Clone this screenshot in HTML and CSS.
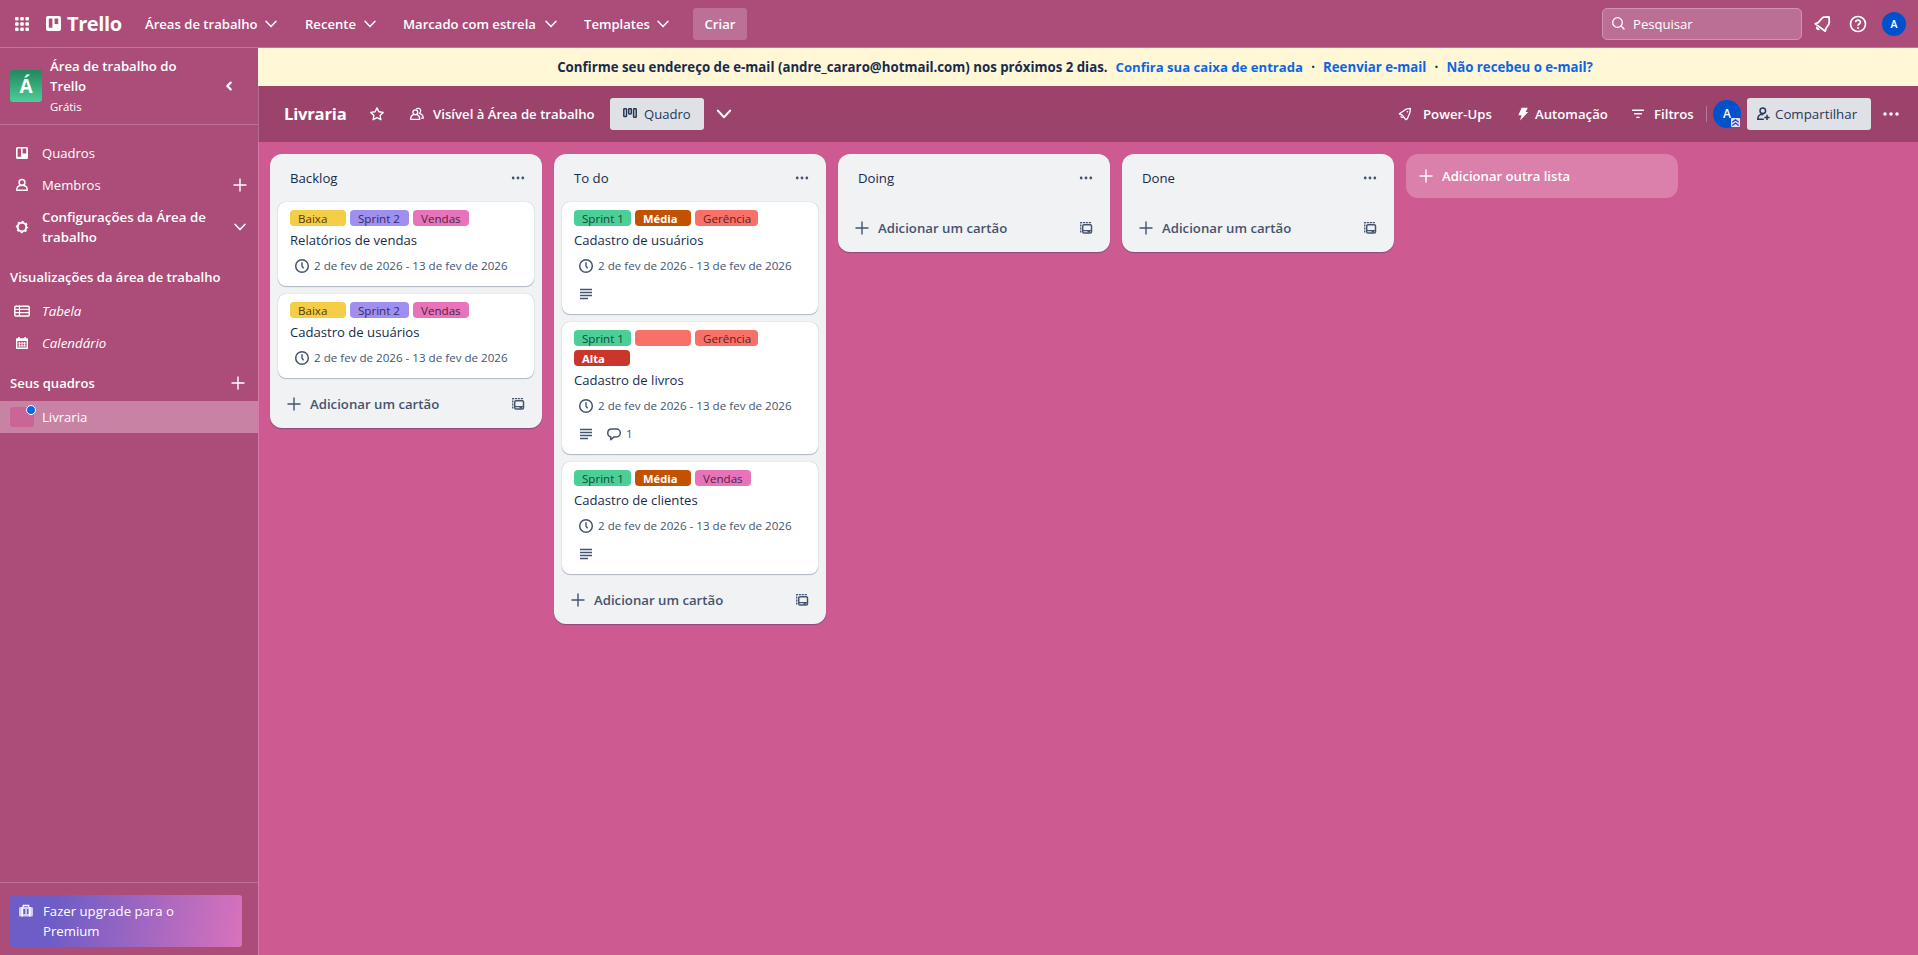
FILE: index.html
```html
<!DOCTYPE html>
<html lang="pt-BR">
<head>
<meta charset="utf-8">
<title>Livraria | Trello</title>
<link rel="stylesheet" href="styles.css">
</head>
<body>
<svg class="sprite" aria-hidden="true">
  <symbol id="chevron" viewBox="0 0 16 16"><path d="M3 5.2 8 10.6 13 5.2" fill="none" stroke="currentColor" stroke-width="1.5" stroke-linecap="round" stroke-linejoin="round"/></symbol>
  <symbol id="plus" viewBox="0 0 16 16"><path d="M8 2v12M2 8h12" fill="none" stroke="currentColor" stroke-width="1.4" stroke-linecap="round"/></symbol>
  <symbol id="dots" viewBox="0 0 16 16"><g fill="currentColor"><circle cx="3.2" cy="8" r="1.4"/><circle cx="8" cy="8" r="1.4"/><circle cx="12.8" cy="8" r="1.4"/></g></symbol>
  <symbol id="clock" viewBox="0 0 16 16"><circle cx="8" cy="8" r="6.3" fill="none" stroke="currentColor" stroke-width="1.5"/><path d="M8 4.2V8l1.600 2.300" fill="none" stroke="currentColor" stroke-width="1.4"/></symbol>
  <symbol id="desc" viewBox="0 0 16 16"><path d="M2 3.500h12M2 6.500h12M2 9.500h12M2 12.500h8" fill="none" stroke="currentColor" stroke-width="1.6"/></symbol>
  <symbol id="comment" viewBox="0 0 16 16"><path d="M5.600 3.100h4.800a3.900 3.900 0 0 1 0 7.800H8L4.800 13.700v-2.900A3.900 3.900 0 0 1 5.600 3.100z" fill="none" stroke="currentColor" stroke-width="1.5" stroke-linejoin="round"/></symbol>
  <symbol id="template" viewBox="0 0 16 16"><path d="M2.700 12.600V2.600h10.300" fill="none" stroke="currentColor" stroke-width="1.3" stroke-dasharray="2.2 .8"/><rect x="4.700" y="4.700" width="8.800" height="8.400" rx="1.300" fill="none" stroke="currentColor" stroke-width="1.5"/><path d="M5 10.600h8.500M9.500 11.800h2.500" stroke="currentColor" stroke-width="1.2"/></symbol>
  <symbol id="board" viewBox="0 0 16 16"><path fill="currentColor" fill-rule="evenodd" d="M3.500 2h9A1.500 1.500 0 0 1 14 3.500v9a1.500 1.500 0 0 1-1.500 1.500h-9A1.500 1.500 0 0 1 2 12.500v-9A1.500 1.500 0 0 1 3.500 2zM3.600 3.400v8.400h3.500V3.400zm5 0v5.200h3.600V3.400z"/></symbol>
  <symbol id="member" viewBox="0 0 16 16"><path d="M2.700 13.300c0-2.500 1.500-4.400 3.300-4.800h4c1.800.4 3.300 2.300 3.300 4.800z" fill="none" stroke="currentColor" stroke-width="1.4" stroke-linejoin="round"/><circle cx="8" cy="5.400" r="2.900" fill="none" stroke="currentColor" stroke-width="1.5"/></symbol>
  <symbol id="gear" viewBox="0 0 16 16"><circle cx="8" cy="8" r="4.300" fill="none" stroke="currentColor" stroke-width="1.900"/><circle cx="8" cy="8" r="5.400" fill="none" stroke="currentColor" stroke-width="1.500" stroke-dasharray="2.1 2.141" stroke-dashoffset="1"/></symbol>
  <symbol id="rocket" viewBox="0 0 16 16"><path d="M13.500 2.400 9 3.200 2.400 7.800l2.900 1.300 3.400 4.500 1.500-.7L12.800 7z" fill="none" stroke="currentColor" stroke-width="1.3" stroke-linejoin="round"/><path d="M5.200 9.200l-1.500 1.900 2.600.5" fill="none" stroke="currentColor" stroke-width="1"/><circle cx="10.400" cy="5.700" r=".8" fill="currentColor"/></symbol>
  <symbol id="view-users" viewBox="0 0 16 16"><path d="M1.600 13.300c0-2.400 1.300-4 2.700-4.600h3.800c1.500.6 2.700 2.200 2.700 4.600z" fill="none" stroke="currentColor" stroke-width="1.3" stroke-linejoin="round"/><circle cx="6.300" cy="6.200" r="2.400" fill="none" stroke="currentColor" stroke-width="1.3"/><path d="M7.200 3.200c1.200-1.500 4.400-1 4.500 1.500 0 1.400-.6 2.200-1.200 2.700 1.900.6 3.700 2.200 3.800 4.700h-2" fill="none" stroke="currentColor" stroke-width="1.3"/></symbol>
</svg>

<header class="topbar">
  <svg class="apps" viewBox="0 0 14 14"><g fill="currentColor"><rect width="3.600" height="3.600" rx="1"/><rect x="5.200" width="3.600" height="3.600" rx="1"/><rect x="10.400" width="3.600" height="3.600" rx="1"/><rect y="5.200" width="3.600" height="3.600" rx="1"/><rect x="5.200" y="5.200" width="3.600" height="3.600" rx="1"/><rect x="10.400" y="5.200" width="3.600" height="3.600" rx="1"/><rect y="10.400" width="3.600" height="3.600" rx="1"/><rect x="5.200" y="10.400" width="3.600" height="3.600" rx="1"/><rect x="10.400" y="10.400" width="3.600" height="3.600" rx="1"/></g></svg>
  <div class="logo">
    <svg width="15" height="15" viewBox="0 0 15 15"><path fill="currentColor" fill-rule="evenodd" d="M2 0h11a2 2 0 0 1 2 2v11a2 2 0 0 1-2 2H2a2 2 0 0 1-2-2V2a2 2 0 0 1 2-2zm.8 2.500v9.300h3.600V2.500zm5.800 0v5.500h3.600V2.500z"/></svg>
    <span class="wordmark">Trello</span>
  </div>
  <nav class="menu">
    <a class="menu-item w-areas">Áreas de trabalho<svg class="ic"><use href="#chevron"/></svg></a>
    <a class="menu-item w-recent">Recente<svg class="ic"><use href="#chevron"/></svg></a>
    <a class="menu-item w-star">Marcado com estrela<svg class="ic"><use href="#chevron"/></svg></a>
    <a class="menu-item w-tpl">Templates<svg class="ic"><use href="#chevron"/></svg></a>
  </nav>
  <button class="create">Criar</button>
  <div class="search"><svg class="ic" viewBox="0 0 16 16"><circle cx="6.500" cy="6.500" r="4.800" fill="none" stroke="currentColor" stroke-width="1.3"/><path d="m10.100 10.100 2.900 3" stroke="currentColor" stroke-width="1.4" stroke-linecap="round"/></svg>Pesquisar</div>
  <svg class="bell" width="18" height="18" viewBox="0 0 18 18"><path d="M10.300 2.200 16 1.900l.3 5.200c-.2 3-2 4.300-3.300 6.100l-.8 3L2.300 8.900l3-1.400c1.700-1.800 2.600-4 5-5.300z" fill="none" stroke="currentColor" stroke-width="1.8" stroke-linejoin="round"/><path d="M3.600 11.900c-.8 1.700.5 3.500 2.800 2.700z" fill="currentColor" stroke="currentColor"/></svg>
  <svg class="help" width="18" height="18" viewBox="0 0 18 18"><circle cx="9" cy="9" r="7.500" fill="none" stroke="currentColor" stroke-width="1.7"/><path d="M6.700 7.300c0-3 4.700-3 4.700-.1C11.400 9 9 8.900 9 10.800" fill="none" stroke="currentColor" stroke-width="1.7"/><circle cx="9" cy="12.900" r="1" fill="currentColor"/></svg>
  <div class="avatar small">A</div>
</header>

<div class="main">
  <aside class="sidebar">
    <div class="ws">
      <div class="ws-logo">Á</div>
      <div class="ws-text"><div class="ws-name">Área de trabalho do Trello</div><div class="ws-plan">Grátis</div></div>
      <svg class="collapse" width="16" height="16" viewBox="0 0 16 16"><path d="M9.700 4.600 6.300 8l3.400 3.400" fill="none" stroke="currentColor" stroke-width="2.2" stroke-linecap="round" stroke-linejoin="round"/></svg>
    </div>
    <nav class="nav">
      <a class="row"><svg class="ic"><use href="#board"/></svg><span class="row-text">Quadros</span></a>
      <a class="row"><svg class="ic"><use href="#member"/></svg><span class="row-text">Membros</span><svg class="ic"><use href="#plus"/></svg></a>
      <a class="row tall"><svg class="ic"><use href="#gear"/></svg><span class="row-text strong">Configurações da Área de trabalho</span><svg class="ic"><use href="#chevron"/></svg></a>
      <h2 class="heading">Visualizações da área de trabalho</h2>
      <a class="row italic"><svg class="ic" viewBox="0 0 16 16"><rect x=".8" y="3.200" width="14.400" height="9.900" rx="1" fill="none" stroke="currentColor" stroke-width="1.5"/><path d="M1 6.300h14M1 9.600h14M5.500 3.500v9.500" stroke="currentColor" stroke-width="1.2"/></svg><span class="row-text">Tabela</span></a>
      <a class="row italic"><svg class="ic" viewBox="0 0 16 16"><path fill="currentColor" fill-rule="evenodd" d="M4 2h1.700v1.200h4.600V2H12v1.200h1.200c.5 0 .8.300.8.800v9.200c0 .5-.3.800-.8.800H2.800c-.5 0-.8-.3-.8-.8V4c0-.5.3-.8.8-.8H4zM3.400 6v6.500h9.200V6z"/><path d="M4.300 8.200h7.500M4.300 10.900h7.500M5.400 6.900v4.800M8 6.900v4.800M10.600 6.900v4.800" stroke="currentColor" stroke-width=".9"/></svg><span class="row-text">Calendário</span></a>
      <h2 class="heading">Seus quadros<svg class="ic"><use href="#plus"/></svg></h2>
      <a class="row selected"><span class="thumb"><i class="dot"></i></span><span class="row-text">Livraria</span></a>
    </nav>
    <div class="upgrade-box">
      <div class="upgrade">
        <svg class="ic" viewBox="0 0 16 16"><rect x="1" y="4" width="14" height="9.600" rx="1.500" fill="currentColor" opacity=".7"/><path d="M5.300 4V2.500h5.400V4M4.200 4v9.600M11.800 4v9.600" fill="none" stroke="currentColor" stroke-width="1.4"/><path d="M5.300 6h2v5h-2zM9 6h1.500v5H9z" fill="#6e5dc6"/></svg>
        <span>Fazer upgrade para o Premium</span>
      </div>
    </div>
  </aside>

  <section class="content">
    <div class="banner">
      <span class="b-text">Confirme seu endereço de e-mail (andre_cararo@hotmail.com) nos próximos 2 dias.</span><a class="b-link l1">Confira sua caixa de entrada</a><span class="sep">·</span><a class="b-link">Reenviar e-mail</a><span class="sep">·</span><a class="b-link">Não recebeu o e-mail?</a>
    </div>
    <div class="board-head">
      <h1 class="title">Livraria</h1>
      <svg class="ic star" viewBox="0 0 16 16"><path d="m8 1.900 1.900 3.900 4.300.6-3.100 3 .7 4.300L8 11.700l-3.800 2 .7-4.300-3.100-3 4.300-.6z" fill="none" stroke="currentColor" stroke-width="1.4" stroke-linejoin="round"/></svg>
      <div class="visibility"><svg class="ic"><use href="#view-users"/></svg>Visível à Área de trabalho</div>
      <button class="light quadro"><svg class="ic" viewBox="0 0 16 16"><g fill="none" stroke="currentColor" stroke-width="1.5"><rect x="1.800" y="2.700" width="2.700" height="7.800" rx=".6"/><rect x="6.700" y="2.700" width="2.600" height="5.200" rx=".6"/><rect x="11.600" y="2.700" width="2.600" height="8.600" rx=".6"/></g></svg>Quadro</button>
      <svg class="views-arrow" width="20" height="20"><use href="#chevron"/></svg>
      <div class="tool powerups"><svg class="ic"><use href="#rocket"/></svg>Power-Ups</div>
      <div class="tool auto"><svg class="ic" viewBox="0 0 16 16"><path d="M6.600 1.800h6.200L10.700 6h2.500L5 14.500l1.600-5.300H3.300z" fill="currentColor"/></svg>Automação</div>
      <div class="tool filters"><svg class="ic" viewBox="0 0 16 16"><path d="M2.600 4.200h10.800M4.600 7.800h6.800M6.900 11.400h2.200" stroke="currentColor" stroke-width="1.4" stroke-linecap="round"/></svg>Filtros</div>
      <i class="divider"></i>
      <div class="avatar big">A<svg class="admin" width="9" height="9" viewBox="0 0 9 9"><rect width="9" height="9" rx="1" fill="#dfe1f3"/><path d="M1.300 4.200 4.500 1.800l3.200 2.400M1.300 7.400 4.500 5l3.200 2.400" fill="none" stroke="#3442a8" stroke-width="1.3"/></svg></div>
      <button class="light share"><svg class="ic" viewBox="0 0 16 16"><circle cx="7.800" cy="4.800" r="2.800" fill="none" stroke="currentColor" stroke-width="1.5"/><path d="M8.800 13.200H2.800c0-2.800 1.500-4.200 3.200-4.800h2.400M12 8.800v5.200M9.400 11.400h5.200" fill="none" stroke="currentColor" stroke-width="1.5"/></svg>Compartilhar</button>
      <svg class="more" width="20" height="20"><use href="#dots"/></svg>
    </div>

    <div class="board">
      <div class="list">
        <div class="list-head">Backlog<svg class="ic"><use href="#dots"/></svg></div>
        <div class="cards">
          <article class="card">
            <div class="labels"><span class="label yellow">Baixa</span><span class="label purple w59">Sprint 2</span><span class="label pink">Vendas</span></div>
            <div class="card-title">Relatórios de vendas</div>
            <div class="badges"><span class="date"><svg class="ic"><use href="#clock"/></svg>2 de fev de 2026 - 13 de fev de 2026</span></div>
          </article>
          <article class="card">
            <div class="labels"><span class="label yellow">Baixa</span><span class="label purple w59">Sprint 2</span><span class="label pink">Vendas</span></div>
            <div class="card-title">Cadastro de usuários</div>
            <div class="badges"><span class="date"><svg class="ic"><use href="#clock"/></svg>2 de fev de 2026 - 13 de fev de 2026</span></div>
          </article>
        </div>
        <div class="list-foot"><svg class="ic"><use href="#plus"/></svg><span>Adicionar um cartão</span><svg class="ic"><use href="#template"/></svg></div>
      </div>

      <div class="list">
        <div class="list-head">To do<svg class="ic"><use href="#dots"/></svg></div>
        <div class="cards">
          <article class="card">
            <div class="labels"><span class="label green w57">Sprint 1</span><span class="label orange">Média</span><span class="label red w63">Gerência</span></div>
            <div class="card-title">Cadastro de usuários</div>
            <div class="badges"><span class="date"><svg class="ic"><use href="#clock"/></svg>2 de fev de 2026 - 13 de fev de 2026</span><span class="badge"><svg class="ic"><use href="#desc"/></svg></span></div>
          </article>
          <article class="card">
            <div class="labels"><span class="label green w57">Sprint 1</span><span class="label red"></span><span class="label red w63">Gerência</span><span class="label crimson">Alta</span></div>
            <div class="card-title">Cadastro de livros</div>
            <div class="badges"><span class="date"><svg class="ic"><use href="#clock"/></svg>2 de fev de 2026 - 13 de fev de 2026</span><span class="badge"><svg class="ic"><use href="#desc"/></svg></span><span class="badge"><svg class="ic"><use href="#comment"/></svg>1</span></div>
          </article>
          <article class="card">
            <div class="labels"><span class="label green w57">Sprint 1</span><span class="label orange">Média</span><span class="label pink">Vendas</span></div>
            <div class="card-title">Cadastro de clientes</div>
            <div class="badges"><span class="date"><svg class="ic"><use href="#clock"/></svg>2 de fev de 2026 - 13 de fev de 2026</span><span class="badge"><svg class="ic"><use href="#desc"/></svg></span></div>
          </article>
        </div>
        <div class="list-foot"><svg class="ic"><use href="#plus"/></svg><span>Adicionar um cartão</span><svg class="ic"><use href="#template"/></svg></div>
      </div>

      <div class="list">
        <div class="list-head">Doing<svg class="ic"><use href="#dots"/></svg></div>
        <div class="list-foot"><svg class="ic"><use href="#plus"/></svg><span>Adicionar um cartão</span><svg class="ic"><use href="#template"/></svg></div>
      </div>

      <div class="list">
        <div class="list-head">Done<svg class="ic"><use href="#dots"/></svg></div>
        <div class="list-foot"><svg class="ic"><use href="#plus"/></svg><span>Adicionar um cartão</span><svg class="ic"><use href="#template"/></svg></div>
      </div>

      <div class="add-list"><svg class="ic"><use href="#plus"/></svg>Adicionar outra lista</div>
    </div>
  </section>
</div>
</body>
</html>
```
FILE: styles.css
```css
* { box-sizing: border-box; }
body {
  margin: 0;
  height: 955px;
  overflow: hidden;
  display: flex;
  flex-direction: column;
  font: 13.1px/20px "Open Sans", "Noto Sans", sans-serif;
  color: #172b4d;
  background: #cd5a91;
}
h1, h2 { margin: 0; font: inherit; }
button { border: 0; font: inherit; color: inherit; }
svg { display: block; flex: none; }
.ic { width: 16px; height: 16px; }
.sprite { position: absolute; width: 0; height: 0; }

/* Top navigation */
.topbar {
  flex: none;
  height: 48px;
  display: flex;
  align-items: center;
  padding: 0 12px 0 15px;
  background: #ab4c79;
  border-bottom: 1px solid #bf749a;
  color: #fff;
}
.apps { width: 14px; height: 14px; }
.logo { display: flex; align-items: center; gap: 6px; width: 99px; margin-left: 17px; }
.wordmark { font-size: 20px; font-weight: 700; line-height: 24px; letter-spacing: -0.4px; }
.menu { display: flex; font-weight: 600; }
.menu-item { display: flex; align-items: center; justify-content: space-between; }
.w-areas { width: 134px; }
.w-recent { width: 73px; margin-left: 26px; }
.w-star { width: 156px; margin-left: 25px; }
.w-tpl { width: 87px; margin-left: 25px; }
.create {
  width: 54px;
  height: 32px;
  margin-left: 22px;
  padding: 0;
  border-radius: 3px;
  background: #bd7095;
  font-weight: 600;
}
.search {
  display: flex;
  align-items: center;
  gap: 6px;
  width: 200px;
  height: 32px;
  margin-left: auto;
  padding: 1px 8px 0;
  border: 1px solid #cf93b2;
  border-radius: 5px;
  background: #bc6f94;
}
.bell { margin-left: 11px; }
.help { margin-left: 18px; }
.avatar {
  display: grid;
  place-items: center;
  border-radius: 50%;
  background: #0052cc;
  color: #fff;
  font-weight: 600;
}
.small { width: 24px; height: 24px; margin-left: 15px; font-size: 10.5px; }

/* Page frame */
.main { flex: 1; display: flex; min-height: 0; }

/* Sidebar */
.sidebar {
  flex: none;
  width: 258px;
  display: flex;
  flex-direction: column;
  background: #ab4d78;
  color: #fff;
}
.ws {
  display: flex;
  align-items: center;
  gap: 8px;
  height: 77px;
  padding: 0 21px 0 10px;
  border-bottom: 1px solid #bd7195;
}
.ws-logo {
  width: 32px;
  height: 32px;
  border-radius: 3px;
  background: linear-gradient(#22875c, #4bce97);
  text-align: center;
  font-size: 19px;
  font-weight: 700;
  line-height: 32px;
}
.ws-text { width: 150px; }
.ws-name { width: 135px; font-size: 13.2px; font-weight: 600; }
.ws-plan { padding-top: 1px; font-size: 11.4px; line-height: 19px; }
.collapse { margin-left: auto; }
.nav { padding-top: 12px; }
.row { display: flex; align-items: center; gap: 12px; height: 32px; padding: 0 10px 0 14px; }
.row-text { flex: 1; }
.tall { height: 52px; }
.strong { font-weight: 600; font-size: 13.3px; }
.italic .row-text { font-size: 13.3px; font-style: italic; }
.heading {
  display: flex;
  align-items: center;
  justify-content: space-between;
  height: 42px;
  padding: 6px 12px 0 10px;
  font-size: 13.05px;
  font-weight: 600;
}
.selected { padding-left: 10px; gap: 8px; background: #c782a4; }
.thumb { position: relative; width: 24px; height: 20px; border-radius: 3px; background: #cb6597; }
.dot {
  position: absolute;
  top: -2px;
  right: -2px;
  width: 10px;
  height: 10px;
  border: 1px solid #fff;
  border-radius: 50%;
  background: #0c66e4;
}
.upgrade-box { margin-top: auto; height: 73px; padding: 12px 16px 0 10px; border-top: 1px solid #bd7195; }
.upgrade {
  display: flex;
  gap: 9px;
  height: 52px;
  padding: 6px 50px 6px 8px;
  border-radius: 3px;
  background: linear-gradient(100deg, #6e5dc6 20%, #d671bc 97%);
  font-size: 13.2px;
}
.upgrade .ic { margin-top: 2px; }

/* Email banner */
.content { flex: 1; min-width: 0; display: flex; flex-direction: column; }
.banner {
  flex: none;
  display: flex;
  justify-content: center;
  align-items: center;
  height: 38px;
  padding-right: 26px;
  background: #fff7d6;
  font-size: 13.25px;
  font-weight: 700;
  white-space: nowrap;
}
.b-link { color: #0c66e4; }
.l1 { margin-left: 8px; font-size: 13.15px; }
.sep { width: 20px; text-align: center; }

/* Board header */
.board-head {
  flex: none;
  display: flex;
  align-items: center;
  height: 56px;
  padding: 0 17px 0 25px;
  border-left: 1px solid #b06d8d;
  background: #9c436c;
  color: #fff;
  font-weight: 600;
  white-space: nowrap;
}
.title { width: 64px; font-size: 16.6px; font-weight: 700; letter-spacing: -.2px; }
.star { margin-left: 21px; }
.visibility { display: flex; align-items: center; gap: 8px; width: 187px; margin-left: 24px; font-size: 13.2px; }
.light {
  display: flex;
  align-items: center;
  height: 32px;
  border-radius: 3px;
  background: #dfe1e6;
  color: #253858;
  font-weight: 400;
}
.quadro { width: 94px; margin-left: 14px; padding: 0 0 0 12px; gap: 6px; font-weight: 500; }
.views-arrow { margin-left: 10px; }
.tool { display: flex; align-items: center; font-size: 13.2px; }
.powerups { margin-left: auto; gap: 10px; width: 96px; }
.auto { margin-left: 22px; gap: 4px; width: 93px; }
.filters { margin-left: 22px; gap: 8px; width: 64px; }
.divider { width: 1px; height: 16px; margin: 0 6px 0 12px; background: #b5799a; }
.avatar.big { position: relative; width: 28px; height: 28px; font-size: 12px; }
.admin { position: absolute; right: 1px; bottom: 1px; }
.share { width: 124px; margin-left: 6px; padding: 0 0 0 8px; gap: 4px; font-size: 13.3px; font-weight: 500; }
.more { margin-left: 10px; }

/* Board lists */
.board {
  flex: 1;
  display: flex;
  align-items: flex-start;
  gap: 12px;
  padding: 12px 0 0 11px;
  border-left: 1px solid #d57ba7;
}
.list {
  flex: none;
  width: 272px;
  border-radius: 12px;
  background: #f1f2f4;
  box-shadow: 0 1px 1px rgba(9, 30, 66, .3);
}
.list-head {
  display: flex;
  align-items: center;
  justify-content: space-between;
  height: 48px;
  padding: 0 16px 0 20px;
  font-size: 13.2px;
  font-weight: 500;
}
.list-head .ic { color: #44546f; }
.cards { display: flex; flex-direction: column; gap: 8px; padding: 0 8px; }
.card {
  padding: 8px 12px;
  border-radius: 8px;
  background: #fff;
  box-shadow: 0 1px 1px rgba(9, 30, 66, .25), 0 0 1px rgba(9, 30, 66, .31);
}
.labels { display: flex; flex-wrap: wrap; gap: 4px; }
.label {
  width: 56px;
  height: 16px;
  padding-left: 8px;
  border-radius: 4px;
  font-size: 11.6px;
  line-height: 17px;
}
.w57 { width: 57px; }
.w59 { width: 59px; }
.w63 { width: 63px; }
.yellow { background: #f5cd47; color: #533f04; }
.purple { background: #9f8fef; color: #352c63; }
.pink { background: #e774bb; color: #50253f; }
.green { background: #4bce97; color: #164b35; }
.red { background: #f87168; color: #5d1f1a; }
.orange { background: #c25100; color: #fff; font-size: 11.2px; font-weight: 700; }
.crimson { background: #c9372c; color: #fff; font-size: 11.2px; font-weight: 700; }
.card-title { margin: 4px 0; }
.badges { display: flex; flex-wrap: wrap; gap: 4px; color: #44546f; font-size: 11.6px; }
.date, .badge { display: flex; align-items: center; gap: 4px; height: 24px; padding: 0 4px; }
.date { width: 232px; }
.list-foot {
  display: flex;
  align-items: center;
  height: 50px;
  padding: 2px 16px 0;
  color: #44546f;
  font-size: 13.2px;
  font-weight: 600;
}
.list-foot span { flex: 1; margin-left: 8px; }
.add-list {
  display: flex;
  align-items: center;
  gap: 8px;
  width: 272px;
  height: 44px;
  padding: 0 12px;
  border-radius: 12px;
  background: #da80aa;
  color: #fff;
  font-weight: 600;
}
```
